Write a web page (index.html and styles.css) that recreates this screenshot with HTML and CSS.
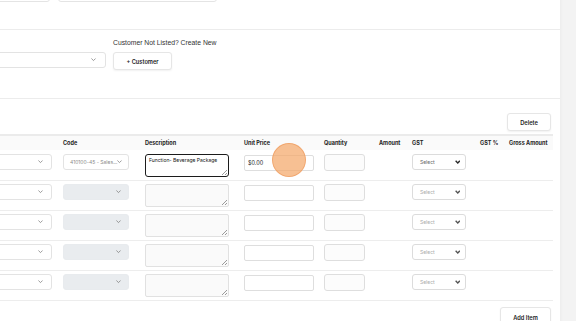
FILE: index.html
```html
<!DOCTYPE html>
<html lang="en">
<head>
	<meta charset="UTF-8">
	<title>Invoice Items</title>
	<link rel="stylesheet" href="styles.css">
</head>
<body>
	<div class="page">
		<section class="sec sec-top">
			<div class="top-fields">
				<div class="field field-a"></div>
				<div class="field field-b"></div>
			</div>
		</section>

		<section class="sec sec-customer">
			<div class="customer-grid">
				<span></span>
				<p class="hint">Customer Not Listed? Create New</p>
				<div class="sel sel-customer"><span></span><svg class="chev" viewBox="0 0 6 4"><polyline points="0.5,0.5 3,3 5.5,0.5"/></svg></div>
				<button class="btn btn-customer">+ Customer</button>
			</div>
		</section>

		<section class="sec-items">
			<div class="toolbar"><button class="btn btn-delete">Delete</button></div>

			<div class="items">
				<div class="row head">
					<span></span>
					<span>Code</span>
					<span>Description</span>
					<span>Unit Price</span>
					<span>Quantity</span>
					<span>Amount</span>
					<span>GST</span>
					<span>GST %</span>
					<span>Gross Amount</span>
				</div>

				<div class="row first">
					<div class="cell-lead"><div class="sel sel-lead"><span></span><svg class="chev" viewBox="0 0 6 4"><polyline points="0.5,0.5 3,3 5.5,0.5"/></svg></div></div>
					<div class="sel sel-code"><span>410100-45 - Sales...</span><svg class="chev" viewBox="0 0 6 4"><polyline points="0.5,0.5 3,3 5.5,0.5"/></svg></div>
					<textarea class="desc active">Function- Beverage Package</textarea>
					<input class="price" type="text" value="$0.00">
					<input class="qty" type="text" value="">
					<span></span>
					<div class="sel gst"><span>Select</span><svg class="chev bold" viewBox="0 0 6 4"><polyline points="0.7,0.7 3,3 5.3,0.7"/></svg></div>
					<span></span>
					<span></span>
				</div>

				<div class="row">
					<div class="cell-lead"><div class="sel sel-lead"><span></span><svg class="chev" viewBox="0 0 6 4"><polyline points="0.5,0.5 3,3 5.5,0.5"/></svg></div></div>
					<div class="sel sel-code empty"><span></span><svg class="chev" viewBox="0 0 6 4"><polyline points="0.5,0.5 3,3 5.5,0.5"/></svg></div>
					<textarea class="desc"></textarea>
					<input class="price" type="text" value="">
					<input class="qty" type="text" value="">
					<span></span>
					<div class="sel gst dim"><span>Select</span><svg class="chev bold" viewBox="0 0 6 4"><polyline points="0.7,0.7 3,3 5.3,0.7"/></svg></div>
					<span></span>
					<span></span>
				</div>

				<div class="row">
					<div class="cell-lead"><div class="sel sel-lead"><span></span><svg class="chev" viewBox="0 0 6 4"><polyline points="0.5,0.5 3,3 5.5,0.5"/></svg></div></div>
					<div class="sel sel-code empty"><span></span><svg class="chev" viewBox="0 0 6 4"><polyline points="0.5,0.5 3,3 5.5,0.5"/></svg></div>
					<textarea class="desc"></textarea>
					<input class="price" type="text" value="">
					<input class="qty" type="text" value="">
					<span></span>
					<div class="sel gst dim"><span>Select</span><svg class="chev bold" viewBox="0 0 6 4"><polyline points="0.7,0.7 3,3 5.3,0.7"/></svg></div>
					<span></span>
					<span></span>
				</div>

				<div class="row">
					<div class="cell-lead"><div class="sel sel-lead"><span></span><svg class="chev" viewBox="0 0 6 4"><polyline points="0.5,0.5 3,3 5.5,0.5"/></svg></div></div>
					<div class="sel sel-code empty"><span></span><svg class="chev" viewBox="0 0 6 4"><polyline points="0.5,0.5 3,3 5.5,0.5"/></svg></div>
					<textarea class="desc"></textarea>
					<input class="price" type="text" value="">
					<input class="qty" type="text" value="">
					<span></span>
					<div class="sel gst dim"><span>Select</span><svg class="chev bold" viewBox="0 0 6 4"><polyline points="0.7,0.7 3,3 5.3,0.7"/></svg></div>
					<span></span>
					<span></span>
				</div>

				<div class="row">
					<div class="cell-lead"><div class="sel sel-lead"><span></span><svg class="chev" viewBox="0 0 6 4"><polyline points="0.5,0.5 3,3 5.5,0.5"/></svg></div></div>
					<div class="sel sel-code empty"><span></span><svg class="chev" viewBox="0 0 6 4"><polyline points="0.5,0.5 3,3 5.5,0.5"/></svg></div>
					<textarea class="desc"></textarea>
					<input class="price" type="text" value="">
					<input class="qty" type="text" value="">
					<span></span>
					<div class="sel gst dim"><span>Select</span><svg class="chev bold" viewBox="0 0 6 4"><polyline points="0.7,0.7 3,3 5.3,0.7"/></svg></div>
					<span></span>
					<span></span>
				</div>
			</div>

			<div class="footer"><button class="btn btn-add">Add Item</button></div>
		</section>
	</div>

	<span class="click-dot"></span>
</body>
</html>
```

FILE: styles.css
```css
/*reset*/
*{
	margin: 0;
	padding: 0;
	box-sizing: border-box;
}
body{
	height: 321px;
	overflow: hidden;
	background-color: #f3f3f3;
	font-family: Inter, "Noto Sans", sans-serif;
	color: #222;
}
/*page card (scrolled a little right and down)*/
.page{
	width: 590px;
	height: 360px;
	margin: -18px 0 0 -30px;
	background-color: #fff;
	box-shadow: 1px 0 3px rgba(0,0,0,.03);
}
.sec{
	border-bottom: 1px solid #ececec;
}
/*top fields*/
.sec-top{
	padding: 0 0 27px 10px;
}
.top-fields{
	display: flex;
	gap: 8px;
}
.field{
	height: 20px;
	border: 1px solid #e4e4e4;
	border-radius: 3px;
}
.field-a{
	width: 70px;
}
.field-b{
	width: 159px;
}
/*customer*/
.sec-customer{
	padding: 8px 0 28px 10px;
}
.customer-grid{
	display: grid;
	grid-template-columns: 126px 59px;
	column-gap: 7px;
	row-gap: 5px;
	align-items: start;
}
.hint{
	font-family: "Liberation Sans", Arial, sans-serif;
	font-size: 6.8px;
	line-height: 9px;
	color: #333;
	white-space: nowrap;
}
/*selects*/
.sel{
	display: flex;
	align-items: center;
	justify-content: space-between;
	height: 16px;
	padding: 0 7px 0 6px;
	border: 1px solid #e3e3e3;
	border-radius: 3px;
	background-color: #fff;
	font-size: 5px;
	color: #8a8a8a;
	white-space: nowrap;
}
.chev{
	width: 5px;
	height: 3.5px;
	flex: none;
	fill: none;
	stroke: #7a7a7a;
	stroke-width: .9;
}
.chev.bold{
	width: 5.5px;
	height: 4px;
	stroke: #2a2a2a;
	stroke-width: 1.5;
}
.sel-customer{
	padding-right: 9px;
}
/*buttons*/
.btn{
	height: 18px;
	border: 1px solid #e6e6e6;
	border-radius: 3px;
	background-color: #fff;
	box-shadow: 0 1px 2px rgba(0,0,0,.06);
	font-family: Inter, "Noto Sans", sans-serif;
	font-size: 5.7px;
	font-weight: 600;
	color: #222;
}
.btn-customer{
	width: 59px;
}
.btn-delete{
	width: 44px;
}
.btn-add{
	width: 51px;
	height: 20px;
}
/*items*/
.sec-items{
	padding-right: 7px;
}
.toolbar{
	display: flex;
	justify-content: flex-end;
	padding: 14px 2px 0 0;
	margin-bottom: 3px;
}
.row{
	display: grid;
	grid-template-columns: 93px 82px 99px 80px 55px 33px 68px 29px 44px;
	align-items: start;
	padding: 3px 0;
	border-bottom: 1px solid #ededed;
}
.row.first{
	padding: 4px 0 3px;
}
.row.head{
	align-items: center;
	height: 16px;
	padding: 0;
	border-top: 2px solid #ebebeb;
	border-bottom: none;
	background-color: #fafafa;
	font-size: 5.5px;
	font-weight: 700;
	color: #222;
	white-space: nowrap;
}
.cell-lead{
	padding-left: 10px;
}
.sel-lead{
	width: 72px;
	padding-right: 8px;
}
.sel-code{
	width: 66px;
}
.sel-code.empty{
	border-color: #e8ebee;
	background-color: #e9ecef;
}
/*textarea: small drawn grip instead of the native one*/
.desc{
	display: block;
	width: 84px;
	height: 23px;
	padding: 2px 3px;
	border: 1px solid #e1e1e1;
	border-radius: 2px;
	resize: none;
	background: #fafafa linear-gradient(135deg, transparent 48%, #9a9a9a 48%, #9a9a9a 56%, transparent 56%, transparent 74%, #9a9a9a 74%, #9a9a9a 82%, transparent 82%) no-repeat right 1px bottom 1px / 5px 5px;
	font-family: Inter, "Noto Sans", sans-serif;
	font-size: 5px;
	color: #111;
	outline: none;
}
.desc.active{
	border: 1.5px solid #1c1c1c;
	border-radius: 3px;
	background-color: #fff;
}
.price,
.qty{
	display: block;
	height: 16px;
	border: 1px solid #dedede;
	border-radius: 2px;
	background-color: #fff;
	font-family: Inter, "Noto Sans", sans-serif;
	font-size: 5.5px;
	color: #222;
	padding-left: 3px;
	outline: none;
}
.price{
	width: 70px;
	margin-top: 1px;
}
.qty{
	width: 41px;
	height: 17px;
	border-radius: 3px;
	background-color: #fcfcfc;
}
.gst{
	width: 54px;
	padding: 0 5px 0 7px;
	border-color: #dcdcdc;
	color: #666;
}
.gst.dim{
	color: #aaa;
}
.gst.dim .chev{
	stroke: #555;
}
.footer{
	display: flex;
	justify-content: flex-end;
	padding: 6px 2px 0 0;
}
/*click marker over the unit price field*/
.click-dot{
	position: absolute;
	left: 272px;
	top: 143px;
	width: 34px;
	height: 34px;
	border: 1px solid rgba(236,146,80,.55);
	border-radius: 50%;
	background-color: rgba(244,168,106,.72);
}
```
